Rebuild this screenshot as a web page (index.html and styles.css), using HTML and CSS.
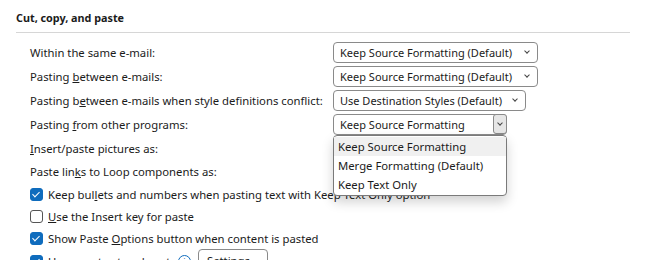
FILE: index.html
```html
<!DOCTYPE html>
<html lang="en">
<head>
    <meta charset="UTF-8">
    <title>Cut, copy, and paste</title>
    <link rel="stylesheet" href="styles.css">
</head>
<body>
    <div class="section-title">Cut, copy, and paste</div>
    <div class="divider"></div>
    <div class="options">
        <div class="row">
            <div class="label">Within the same e-mail:</div>
            <div class="select w1">Keep Source Formatting (Default)<span class="chev"></span></div>
        </div>
        <div class="row">
            <div class="label">Pasting <u>b</u>etween e-mails:</div>
            <div class="select w1">Keep Source Formatting (Default)<span class="chev"></span></div>
        </div>
        <div class="row">
            <div class="label">Pasting b<u>e</u>tween e-mails when style definitions conflict:</div>
            <div class="select w2">Use Destination Styles (Default)<span class="chev"></span></div>
        </div>
        <div class="row">
            <div class="label">Pasting <u>f</u>rom other programs:</div>
            <div class="select w3 open">Keep Source Formatting<span class="chev-btn"><span class="chev"></span></span>
                <div class="dropdown">
                    <div class="item active">Keep Source Formatting</div>
                    <div class="item">Merge Formatting (Default)</div>
                    <div class="item">Keep Text Only</div>
                </div>
            </div>
        </div>
        <div class="row">
            <div class="label"><u>I</u>nsert/paste pictures as:</div>
        </div>
        <div class="row short">
            <div class="label">Paste lin<u>k</u>s to Loop components as:</div>
        </div>
        <div class="check-row">
            <span class="box checked"></span>
            <span class="check-text">Keep bul<u>l</u>ets and numbers when pasting text with Keep Text Only option</span>
        </div>
        <div class="check-row">
            <span class="box"></span>
            <span class="check-text"><u>U</u>se the Insert key for paste</span>
        </div>
        <div class="check-row">
            <span class="box checked"></span>
            <span class="check-text">Show Paste <u>O</u>ptions button when content is pasted</span>
        </div>
        <div class="check-row last">
            <span class="box checked"></span>
            <span class="check-text smart">Use smart cut and paste</span>
            <span class="info">i</span>
            <span class="settings-btn">Settings...</span>
        </div>
    </div>
</body>
</html>
```

FILE: styles.css
```css
body {
    margin: 0;
    padding: 0;
    font-family: "Segoe UI", "Noto Sans", sans-serif;
    font-size: 11.3px;
    color: #1b1b1b;
    background: #fff;
    overflow: hidden;
    white-space: nowrap;
}
.section-title {
    font-weight: bold;
    font-size: 10.8px;
    padding: 9px 0 0 16px;
    height: 18px;
    line-height: 18px;
}
.divider {
    margin: 5px 16px 0 16px;
    border-top: 1px solid #d6d6d6;
}
.options {
    padding: 7px 0 0 30px;
}
.row {
    display: flex;
    align-items: center;
    height: 24px;
}
.row.short {
    height: 23px;
}
.label {
    width: 303px;
}
.select {
    position: relative;
    box-sizing: border-box;
    height: 21px;
    line-height: 19px;
    padding-left: 6px;
    border: 1px solid #8a8a8a;
    border-radius: 4px;
    background: #fff;
    font-size: 11px;
}
.w1 { width: 205px; }
.w2 { width: 193px; }
.w3 { width: 174px; }
.chev {
    position: absolute;
    right: 8px;
    top: 6px;
    width: 3px;
    height: 3px;
    border-right: 1px solid #444;
    border-bottom: 1px solid #444;
    transform: rotate(45deg);
}
.chev-btn {
    position: absolute;
    right: -1px;
    top: -1px;
    width: 14px;
    height: 20px;
    box-sizing: border-box;
    border: 1px solid #8a8a8a;
    border-radius: 3px;
    background: #e6e6e6;
}
.chev-btn .chev {
    right: 4px;
    top: 6px;
}
.dropdown {
    position: absolute;
    left: -1px;
    top: 20px;
    width: 174px;
    box-sizing: border-box;
    border: 1px solid #7a7a7a;
    border-radius: 4px;
    background: #fff;
    box-shadow: 0 6px 12px rgba(0, 0, 0, 0.18);
    padding: 1px 0;
    z-index: 2;
    font-size: 11.3px;
}
.item {
    height: 19px;
    line-height: 19px;
    padding-left: 4px;
}
.item.active {
    background: #f0f0f0;
}
.check-row {
    display: flex;
    align-items: center;
    height: 22px;
}
.check-row.last {
    margin-top: 1px;
}
.box {
    box-sizing: border-box;
    width: 13px;
    height: 13px;
    border: 1px solid #555;
    border-radius: 3px;
    margin-right: 5px;
    position: relative;
}
.box.checked {
    background: #0f6cbd;
    border-color: #0f6cbd;
}
.box.checked::after {
    content: "";
    position: absolute;
    left: 3px;
    top: 1px;
    width: 3px;
    height: 6px;
    border-right: 1.5px solid #fff;
    border-bottom: 1.5px solid #fff;
    transform: rotate(45deg);
}
.check-text.smart {
    width: 130px;
    overflow: hidden;
}
.info {
    box-sizing: border-box;
    width: 13px;
    height: 13px;
    border: 1px solid #0f6cbd;
    border-radius: 50%;
    color: #0f6cbd;
    font-size: 9px;
    line-height: 11px;
    text-align: center;
}
.settings-btn {
    box-sizing: border-box;
    width: 70px;
    height: 24px;
    margin-left: 7px;
    border: 1px solid #8a8a8a;
    border-radius: 4px;
    text-align: center;
    line-height: 22px;
}
```
